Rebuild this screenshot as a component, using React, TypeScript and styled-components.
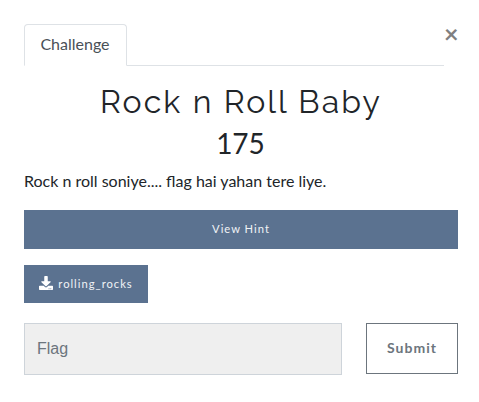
import React from "react";
import styled, { createGlobalStyle } from "styled-components";

const GlobalStyle = createGlobalStyle`
  * { box-sizing: border-box; }
  body { margin: 0; background: #fff; color: #212529; font: 16px/24px Lato, sans-serif; }
`;
const Modal = styled.main`
  padding: 24px 21px 24px 24px;
  height: 402px;
`;
const Header = styled.header`
  display: flex;
  height: 42px;
`;
const Tabs = styled.nav`
  width: 420px;
  border-bottom: 1px solid #dee2e6;
`;
const Tab = styled.button`
  display: block;
  width: 103px;
  height: 42px;
  padding: 0 1px 2px 0;
  border: 1px solid #dee2e6;
  border-bottom-color: #fff;
  border-radius: 4px 4px 0 0;
  background: #fff;
  color: #495057;
  font: 16px/24px Lato, sans-serif;
`;
const Close = styled.button`
  width: 12px;
  height: 19px;
  padding: 0;
  border: 0;
  background: none;
  color: #808080;
  font: 700 25px/19px Lato, sans-serif;
`;
const Title = styled.h2`
  margin: 17px 0 0;
  text-align: center;
  font: 400 32px/38px Raleway, sans-serif;
  letter-spacing: 2.1px;
`;
const Points = styled.h3`
  margin: 5px 1px 0 0;
  text-align: center;
  font: 400 28px/34px Lato, sans-serif;
`;
const Description = styled.p`
  margin: 9px 0 17px;
`;
const Action = styled.button<{ $width: number; $height: number }>`
  display: flex;
  align-items: center;
  justify-content: center;
  gap: 5px;
  width: ${(p) => p.$width}px;
  height: ${(p) => p.$height}px;
  padding: 0 0 2px;
  border: 0;
  background: #5b7290;
  color: #f0f3f6;
  font: 11.2px/17px Lato, sans-serif;
  letter-spacing: 1px;

  svg { color: #fff; }
`;
const Files = styled.div`
  margin: 16px 0 20px;
`;
const Form = styled.form`
  display: flex;
  gap: 24px;
`;
const Input = styled.input`
  width: 318px;
  height: 52px;
  padding: 0 12px;
  border: 1px solid #ced4da;
  border-radius: 0;
  background: #efefef;
  font: 16px "Liberation Sans", sans-serif;
  &::placeholder { color: #6c757d; }
`;
const Submit = styled.button`
  width: 92px;
  height: 51px;
  padding: 0 0 2px;
  border: 1px solid #6c757d;
  background: #fff;
  color: #6c757d;
  font: 700 14px/21px Lato, sans-serif;
  letter-spacing: 1px;
`;

export default function App() {
  return (
    <Modal>
      <GlobalStyle />
      <Header>
        <Tabs><Tab>Challenge</Tab></Tabs>
        <Close aria-label="Close">×</Close>
      </Header>
      <Title>Rock n Roll Baby</Title>
      <Points>175</Points>
      <Description>Rock n roll soniye.... flag hai yahan tere liye.</Description>
      <Action $width={434} $height={39}>View Hint</Action>
      <Files>
        <Action $width={124} $height={38}>
          <svg width="14" height="14" viewBox="0 0 512 512" fill="currentColor" aria-hidden="true">
            <path d="M216 0h80c13.3 0 24 10.7 24 24v168h87.700c17.800 0 26.700 21.500 14.100 34.100L269.700 378.300c-7.500 7.500-19.800 7.500-27.300 0L90.100 226.100c-12.600-12.600-3.700-34.100 14.100-34.100H192V24c0-13.300 10.700-24 24-24zm296 376v112c0 13.300-10.700 24-24 24H24c-13.300 0-24-10.700-24-24V376c0-13.300 10.700-24 24-24h146.700l49 49c20.100 20.100 52.500 20.100 72.600 0l49-49H488c13.300 0 24 10.700 24 24zm-124 88c0-11-9-20-20-20s-20 9-20 20 9 20 20 20 20-9 20-20zm64 0c0-11-9-20-20-20s-20 9-20 20 9 20 20 20 20-9 20-20z" />
          </svg>
          rolling_rocks
        </Action>
      </Files>
      <Form onSubmit={(e) => e.preventDefault()}>
        <Input placeholder="Flag" />
        <Submit>Submit</Submit>
      </Form>
    </Modal>
  );
}
